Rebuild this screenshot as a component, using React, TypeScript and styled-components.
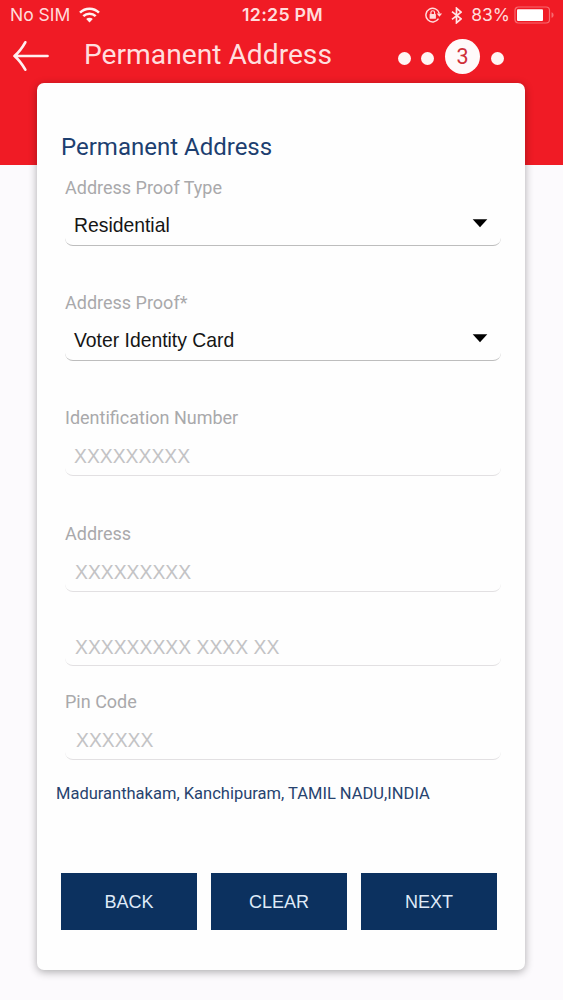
import React from "react";
import styled, { createGlobalStyle } from "styled-components";

const RED = "#f01b25";
const NAVY = "#0c315f";

const GlobalStyle = createGlobalStyle`
  * { box-sizing: border-box; }
  body { margin: 0; background: #fcfafd; }
`;

const Screen = styled.main`
  width: 563px;
  height: 1000px;
  display: flex;
  flex-direction: column;
  overflow: hidden;
  background: linear-gradient(${RED} 0 165px, #fcfafd 165px);
  font-family: Roboto, sans-serif;
`;

const StatusBar = styled.div`
  height: 30px;
  flex: none;
  display: grid;
  grid-template-columns: 1fr auto 1fr;
  align-items: center;
  padding: 0 8px 0 10px;
  color: #ffdcdc;
  font-family: Inter, sans-serif;
  font-size: 17.5px;
  line-height: 30px;
`;

const StatusGroup = styled.div<{ $end?: boolean }>`
  display: flex;
  align-items: center;
  justify-content: ${(p) => (p.$end ? "flex-end" : "flex-start")};
`;

const Carrier = styled.span`
  margin-right: 9px;
`;

const Clock = styled.span`
  font-size: 17.8px;
  font-weight: 600;
  letter-spacing: 0.25px;
`;

const Percent = styled.span`
  margin: 0 4px 0 9px;
`;

const NavBar = styled.header`
  height: 53px;
  flex: none;
  display: flex;
  align-items: center;
  padding: 0 59px 0 12px;
`;

const NavTitle = styled.h1`
  margin: 0 auto 4px 34px;
  color: #ffdede;
  font-size: 28.2px;
  line-height: 36px;
  font-weight: 400;
  white-space: nowrap;
`;

const Steps = styled.div`
  display: flex;
  align-items: center;
`;

const Dot = styled.span<{ $gap: number }>`
  width: 13px;
  height: 13px;
  margin: 3px ${(p) => p.$gap}px 0 0;
  border-radius: 50%;
  background: #fff5f5;
`;

const CurrentStep = styled.span`
  width: 35px;
  height: 35px;
  margin-right: 11px;
  border-radius: 50%;
  background: #fffafa;
  color: #cf3038;
  font-size: 21.5px;
  line-height: 35px;
  text-align: center;
`;

const Card = styled.section`
  width: 488px;
  height: 887px;
  flex: none;
  margin-left: 37px;
  padding: 48px 24px 0 28px;
  display: flex;
  flex-direction: column;
  border-radius: 7px;
  background: #fefefe;
  box-shadow: 0 2px 9px rgba(0, 0, 0, 0.32);
`;

const CardTitle = styled.h2`
  margin: 0 0 13px -4px;
  color: #1d3f70;
  font-size: 24px;
  line-height: 33px;
  font-weight: 400;
`;

const FieldBox = styled.div<{ $top: number }>`
  margin-top: ${(p) => p.$top}px;
  display: flex;
  flex-direction: column;
`;

const Label = styled.label`
  height: 22px;
  color: #a9a9ab;
  font-size: 18px;
  line-height: 22px;
`;

const Control = styled.div<{ $filled?: boolean; $height: number; $indent: number; $lift: number }>`
  height: ${(p) => p.$height}px;
  display: flex;
  align-items: flex-end;
  justify-content: space-between;
  padding: 0 13px ${(p) => p.$lift}px ${(p) => p.$indent}px;
  border-bottom: 1px solid ${(p) => (p.$filled ? "#bdbdbd" : "#e2e0e2")};
  border-radius: 0 0 8px 8px;
  color: ${(p) => (p.$filled ? "#151515" : "#c3c3c5")};
  font-family: "Liberation Sans", sans-serif;
  font-size: 19.35px;
  line-height: 22px;
`;

const Locality = styled.p`
  margin: 24px 0 0 -9px;
  color: #27436f;
  font-size: 16.5px;
  line-height: 20px;
`;

const Actions = styled.div`
  display: flex;
  gap: 14px;
  margin: 69px 0 0 -4px;
`;

const Button = styled.button`
  width: 136px;
  height: 57px;
  padding: 2px 0 0;
  border: 0;
  background: ${NAVY};
  color: #dfeaf8;
  font-family: "Liberation Sans", sans-serif;
  font-size: 18px;
`;

const Caret = styled.svg`
  margin-bottom: 8px;
`;

type FieldProps = {
  label?: string;
  value: string;
  top: number;
  select?: boolean;
  height?: number;
  indent?: number;
  lift?: number;
};

function Field({ label, value, top, select, height = 47, indent = 9, lift = 8 }: FieldProps) {
  return (
    <FieldBox $top={top}>
      {label && <Label>{label}</Label>}
      <Control $filled={select} $height={height} $indent={indent} $lift={lift}>
        <span>{value}</span>
        {select && (
          <Caret width="16" height="9" viewBox="0 0 16 9">
            <path d="M0.7 0.2h14.6L8 8.3z" fill="#000" />
          </Caret>
        )}
      </Control>
    </FieldBox>
  );
}

const WifiIcon = () => (
  <svg width="21" height="16" viewBox="0 0 21 16" fill="none" stroke="#fff0f0" strokeWidth="2.5">
    <path d="M1 5.6a13.4 13.4 0 0 1 19 0" />
    <path d="M4.3 9.2a8.8 8.8 0 0 1 12.4 0" />
    <path d="M7.2 12.1a4.7 4.7 0 0 1 6.6 0L10.5 15.4z" fill="#fff0f0" stroke="none" />
  </svg>
);

const LockIcon = () => (
  <svg width="18" height="16" viewBox="0 0 18 16" fill="none" stroke="#ffdcdc">
    <path d="M14.3 6.5A6.8 6.8 0 1 0 13.5 11.7" strokeWidth="1.5" />
    <path d="M11.7 6.4h5.4l-2.7 3.3z" fill="#ffdcdc" stroke="none" />
    <rect x="4.6" y="7" width="6.3" height="4.7" rx=".5" fill="#ffdcdc" stroke="none" />
    <path d="M5.9 7V5.6a1.85 1.85 0 0 1 3.7 0V7" strokeWidth="1.2" />
  </svg>
);

const BluetoothIcon = () => (
  <svg width="11" height="17" viewBox="0 0 11 17" fill="none" stroke="#ffe6e6" strokeWidth="1.7">
    <path d="M1 4.7l9 7.2-4.5 3.9V1.2L10 5.1l-9 7.2" />
  </svg>
);

const BatteryIcon = () => (
  <svg width="41" height="18" viewBox="0 0 41 18">
    <rect x="1" y="1" width="34.5" height="16" rx="3.5" fill="none" stroke="#f76a70" strokeWidth="1.2" />
    <rect x="3" y="3.2" width="26" height="11.8" rx="1" fill="#fff" />
    <path d="M37.5 6.2c2.8.6 2.8 5 0 5.6z" fill="#f76a70" />
  </svg>
);

const BackArrow = () => (
  <svg width="38" height="34" viewBox="0 0 38 34" fill="none" stroke="#fff0f0" strokeWidth="2.7" strokeLinecap="round" strokeLinejoin="round">
    <path d="M35.5 16H2.5M13.3 2.3Q8.5 10.8 2.5 16Q8.5 21.2 13.3 29.7" />
  </svg>
);

export default function App() {
  return (
    <Screen>
      <GlobalStyle />
      <StatusBar>
        <StatusGroup>
          <Carrier>No SIM</Carrier>
          <WifiIcon />
        </StatusGroup>
        <Clock>12:25 PM</Clock>
        <StatusGroup $end>
          <LockIcon />
          <svg width="8" height="1" />
          <BluetoothIcon />
          <Percent>83%</Percent>
          <BatteryIcon />
        </StatusGroup>
      </StatusBar>
      <NavBar>
        <BackArrow />
        <NavTitle>Permanent Address</NavTitle>
        <Steps>
          <Dot $gap={10} />
          <Dot $gap={11} />
          <CurrentStep>3</CurrentStep>
          <Dot $gap={0} />
        </Steps>
      </NavBar>
      <Card>
        <CardTitle>Permanent Address</CardTitle>
        <Field label="Address Proof Type" value="Residential" top={0} lift={9} select />
        <Field label="Address Proof*" value="Voter Identity Card" top={46} lift={9} select />
        <Field label="Identification Number" value="XXXXXXXXX" top={46} />
        <Field label="Address" value="XXXXXXXXX" top={47} indent={10} />
        <Field value="XXXXXXXXX XXXX XX" top={37} height={37} indent={10} lift={7} />
        <Field label="Pin Code" value="XXXXXX" top={25} indent={11} />
        <Locality>Maduranthakam, Kanchipuram, TAMIL NADU,INDIA</Locality>
        <Actions>
          <Button>BACK</Button>
          <Button>CLEAR</Button>
          <Button>NEXT</Button>
        </Actions>
      </Card>
    </Screen>
  );
}
